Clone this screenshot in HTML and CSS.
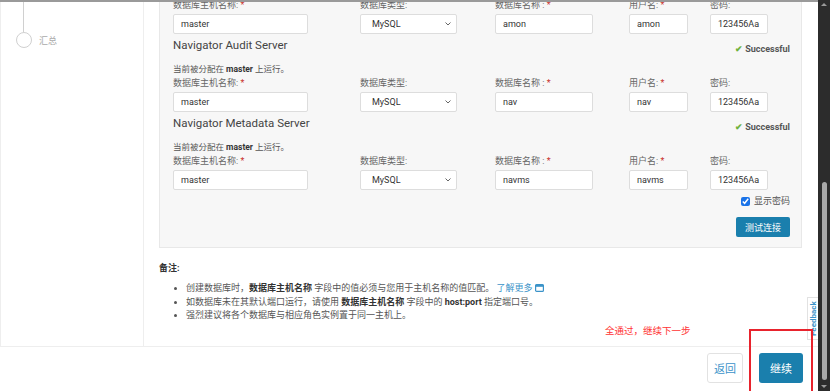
FILE: index.html
```html
<!DOCTYPE html>
<html lang="zh-CN">
<head>
    <meta charset="UTF-8">
    <meta name="viewport" content="width=device-width, initial-scale=1.0">
    <title>数据库设置</title>
    <link rel="stylesheet" href="styles.css">
</head>
<body>
    <div class="page">
        <div class="wizard">
            <div class="steps">
                <div class="step-line"></div>
                <div class="step">
                    <span class="step-dot"></span>
                    <span class="step-name">汇总</span>
                </div>
            </div>

            <div class="content">
                <div class="scroll-body">
                    <div class="panel">
                        <div class="server">
                            <h4>Activity Monitor</h4>
                            <div class="assigned">当前被分配在 <b>master</b> 上运行。</div>
                            <div class="fields">
                                <div class="field">
                                    <label>数据库主机名称: <span class="req">*</span></label>
                                    <input class="w-host" type="text" value="master">
                                </div>
                                <div class="field">
                                    <label>数据库类型:</label>
                                    <div class="select-wrap">
                                        <select><option>MySQL</option></select>
                                        <svg class="chevron" width="6" height="4" viewBox="0 0 6 4"><path d="M0.5 0.5 L3 3 L5.5 0.5" fill="none" stroke="#666" stroke-width="1"/></svg>
                                    </div>
                                </div>
                                <div class="field">
                                    <label>数据库名称 : <span class="req">*</span></label>
                                    <input class="w-name" type="text" value="amon">
                                </div>
                                <div class="field">
                                    <label>用户名: <span class="req">*</span></label>
                                    <input class="w-user" type="text" value="amon">
                                </div>
                                <div class="field">
                                    <label>密码:</label>
                                    <input class="w-pass" type="text" value="123456Aa">
                                </div>
                            </div>
                            <div class="status"><span class="check">&#10004;</span> Successful</div>
                        </div>

                        <div class="server">
                            <h4>Navigator Audit Server</h4>
                            <div class="assigned">当前被分配在 <b>master</b> 上运行。</div>
                            <div class="fields">
                                <div class="field">
                                    <label>数据库主机名称: <span class="req">*</span></label>
                                    <input class="w-host" type="text" value="master">
                                </div>
                                <div class="field">
                                    <label>数据库类型:</label>
                                    <div class="select-wrap">
                                        <select><option>MySQL</option></select>
                                        <svg class="chevron" width="6" height="4" viewBox="0 0 6 4"><path d="M0.5 0.5 L3 3 L5.5 0.5" fill="none" stroke="#666" stroke-width="1"/></svg>
                                    </div>
                                </div>
                                <div class="field">
                                    <label>数据库名称 : <span class="req">*</span></label>
                                    <input class="w-name" type="text" value="nav">
                                </div>
                                <div class="field">
                                    <label>用户名: <span class="req">*</span></label>
                                    <input class="w-user" type="text" value="nav">
                                </div>
                                <div class="field">
                                    <label>密码:</label>
                                    <input class="w-pass" type="text" value="123456Aa">
                                </div>
                            </div>
                            <div class="status"><span class="check">&#10004;</span> Successful</div>
                        </div>

                        <div class="server">
                            <h4>Navigator Metadata Server</h4>
                            <div class="assigned">当前被分配在 <b>master</b> 上运行。</div>
                            <div class="fields">
                                <div class="field">
                                    <label>数据库主机名称: <span class="req">*</span></label>
                                    <input class="w-host" type="text" value="master">
                                </div>
                                <div class="field">
                                    <label>数据库类型:</label>
                                    <div class="select-wrap">
                                        <select><option>MySQL</option></select>
                                        <svg class="chevron" width="6" height="4" viewBox="0 0 6 4"><path d="M0.5 0.5 L3 3 L5.5 0.5" fill="none" stroke="#666" stroke-width="1"/></svg>
                                    </div>
                                </div>
                                <div class="field">
                                    <label>数据库名称 : <span class="req">*</span></label>
                                    <input class="w-name" type="text" value="navms">
                                </div>
                                <div class="field">
                                    <label>用户名: <span class="req">*</span></label>
                                    <input class="w-user" type="text" value="navms">
                                </div>
                                <div class="field">
                                    <label>密码:</label>
                                    <input class="w-pass" type="text" value="123456Aa">
                                </div>
                            </div>
                        </div>

                        <label class="show-pw"><input type="checkbox" checked> 显示密码</label>
                        <div class="actions">
                            <button class="btn-test">测试连接</button>
                        </div>
                    </div>

                    <div class="notes">
                        <div class="notes-title">备注:</div>
                        <ul>
                            <li>创建数据库时，<b>数据库主机名称</b> 字段中的值必须与您用于主机名称的值匹配。 <a href="#">了解更多 <svg width="9" height="8" viewBox="0 0 9 8"><rect x="0.6" y="0.6" width="7.8" height="6.8" rx="1" fill="none" stroke="#3b93c9" stroke-width="1.2"/><rect x="0.6" y="0.6" width="7.8" height="2.2" fill="#3b93c9"/></svg></a></li>
                            <li>如数据库未在其默认端口运行，请使用 <b>数据库主机名称</b> 字段中的 <b>host:port</b> 指定端口号。</li>
                            <li>强烈建议将各个数据库与相应角色实例置于同一主机上。</li>
                        </ul>
                    </div>
                </div>
            </div>
        </div>

        <div class="footer">
            <button class="btn-back">返回</button>
            <button class="btn-next">继续</button>
        </div>
    </div>

    <div class="scrollbar">
        <span class="arrow-up"></span>
        <span class="thumb"></span>
        <span class="arrow-down"></span>
    </div>

    <!-- 截图上的标注 -->
    <div class="note-red">全通过，继续下一步</div>
    <div class="mark-red"></div>

    <div class="feedback">Feedback</div>
</body>
</html>
```

FILE: styles.css
```css
* {
    margin: 0;
    padding: 0;
    box-sizing: border-box;
}

body {
    font-family: Roboto, "Noto Sans CJK SC", sans-serif;
    color: #555;
    background: #fff;
    height: 391px;
    overflow: hidden;
    display: flex;
}

.page {
    flex: 1;
    display: flex;
    flex-direction: column;
    border-top: 2px solid #9a9a9a;
}

.wizard {
    height: 345px;
    display: flex;
    border-left: 1px solid #eee;
    border-bottom: 1px solid #eee;
}

/* 左侧步骤 */
.steps {
    width: 143px;
    border-right: 1px solid #eee;
}

.step-line {
    width: 1px;
    height: 30px;
    margin-left: 22px;
    background-color: #d0d0d0;
}

.step {
    display: flex;
    align-items: center;
    gap: 7px;
    margin-left: 15px;
}

.step-dot {
    width: 16px;
    height: 16px;
    border: 1.5px solid #d0d0d0;
    border-radius: 50%;
}

.step-name {
    font-size: 9px;
    color: #aaa;
}

/* 内容 */
.content {
    flex: 1;
    overflow: hidden;
}

/* 页面已向下滚动 */
.scroll-body {
    margin-top: -57px;
}

.panel {
    margin: 0 16px 0 15px;
    padding: 10px 11px 10px 13px;
    background-color: #f7f7f7;
    border: 1px solid #e8e8e8;
}

.server h4 {
    margin-top: 3px;
    font-size: 11.5px;
    font-weight: normal;
    line-height: 16px;
    color: #444;
}

.assigned {
    margin-top: 9px;
    font-size: 8.5px;
    line-height: 14px;
    color: #555;
}

.assigned b {
    color: #333;
}

.fields {
    display: grid;
    grid-template-columns: 187px 135px 134px 81px 58px;
}

.field label {
    display: block;
    font-size: 9px;
    line-height: 14px;
    margin-bottom: 2px;
    color: #666;
}

.req {
    color: #c9302c;
}

.field input,
.field select {
    display: block;
    height: 20px;
    padding: 0 7px;
    border: 1px solid #ddd;
    border-radius: 2px;
    background-color: #fff;
    font-family: Roboto, "Noto Sans CJK SC", sans-serif;
    font-size: 9px;
    color: #333;
    outline: none;
}

.w-host { width: 135px; }
.w-name { width: 98px; }
.w-user { width: 59px; padding: 0 8px; }
.w-pass { width: 58px; }

.select-wrap {
    position: relative;
    width: 97px;
}

.field select {
    width: 97px;
    padding: 0 11px;
    appearance: none;
}

.chevron {
    position: absolute;
    right: 6px;
    top: 8px;
}

.status {
    float: right;
    margin-top: 9px;
    font-size: 9px;
    line-height: 12px;
    font-weight: bold;
    color: #555;
}

.check {
    color: #6eb23d;
    font-size: 9px;
}

.show-pw {
    display: flex;
    justify-content: flex-end;
    align-items: center;
    gap: 4px;
    height: 14px;
    margin-top: 4px;
    font-size: 9px;
    line-height: 14px;
    color: #555;
}

.show-pw input {
    width: 9px;
    height: 9px;
    accent-color: #1a73e8;
}

.actions {
    display: flex;
    justify-content: flex-end;
    margin-top: 9px;
}

.btn-test {
    height: 20px;
    padding: 0 9px;
    border: none;
    border-radius: 2px;
    background-color: #1a7fad;
    color: white;
    font-family: Roboto, "Noto Sans CJK SC", sans-serif;
    font-size: 9px;
}

/* 备注 */
.notes {
    margin-top: 13px;
    padding-left: 15px;
}

.notes-title {
    font-size: 9px;
    line-height: 14px;
    font-weight: bold;
    color: #333;
}

.notes ul {
    margin-top: 7px;
    padding-left: 27px;
}

.notes li {
    font-size: 9px;
    line-height: 13.5px;
    color: #555;
}

.notes li b {
    color: #333;
}

.notes a {
    color: #3b93c9;
    text-decoration: none;
}

.notes a svg {
    vertical-align: -1px;
}

/* 底部按钮 */
.footer {
    flex: 1;
    display: flex;
    justify-content: flex-end;
    align-items: flex-start;
    gap: 16px;
    padding: 6px 15px 0 0;
}

.footer button {
    height: 30px;
    border-radius: 3px;
    font-family: Roboto, "Noto Sans CJK SC", sans-serif;
    font-size: 11px;
    cursor: pointer;
}

.btn-back {
    width: 36px;
    border: 1px solid #e2e2e2;
    background-color: #fff;
    color: #3b93c9;
}

.btn-next {
    width: 44px;
    border: none;
    background-color: #1a7fad;
    color: #fff;
}

/* 滚动条 */
.scrollbar {
    width: 12px;
    background-color: #2c2c2c;
    display: flex;
    flex-direction: column;
    align-items: center;
}

.arrow-up {
    margin-top: 3px;
    border-left: 3px solid transparent;
    border-right: 3px solid transparent;
    border-bottom: 3px solid #9a9a9a;
}

.thumb {
    width: 5px;
    height: 198px;
    margin-top: 176px;
    border-radius: 3px;
    background-color: #a8a8a8;
}

.arrow-down {
    margin-top: auto;
    margin-bottom: 3px;
    border-left: 3px solid transparent;
    border-right: 3px solid transparent;
    border-top: 3px solid #9a9a9a;
}

/* 标注 */
.note-red {
    position: absolute;
    left: 605px;
    top: 324px;
    font-size: 9.5px;
    line-height: 14px;
    color: #f33;
}

.mark-red {
    position: absolute;
    left: 749px;
    top: 329px;
    width: 64px;
    height: 80px;
    border: 2px solid #e8232d;
    z-index: 2;
}

.feedback {
    position: absolute;
    left: 807px;
    top: 297px;
    width: 11px;
    height: 43px;
    display: flex;
    align-items: center;
    justify-content: center;
    writing-mode: vertical-rl;
    transform: rotate(180deg);
    background-color: #fff;
    border: 1px solid #e2e2e2;
    border-left: none;
    font-size: 8px;
    font-weight: bold;
    color: #3b93c9;
}
```
